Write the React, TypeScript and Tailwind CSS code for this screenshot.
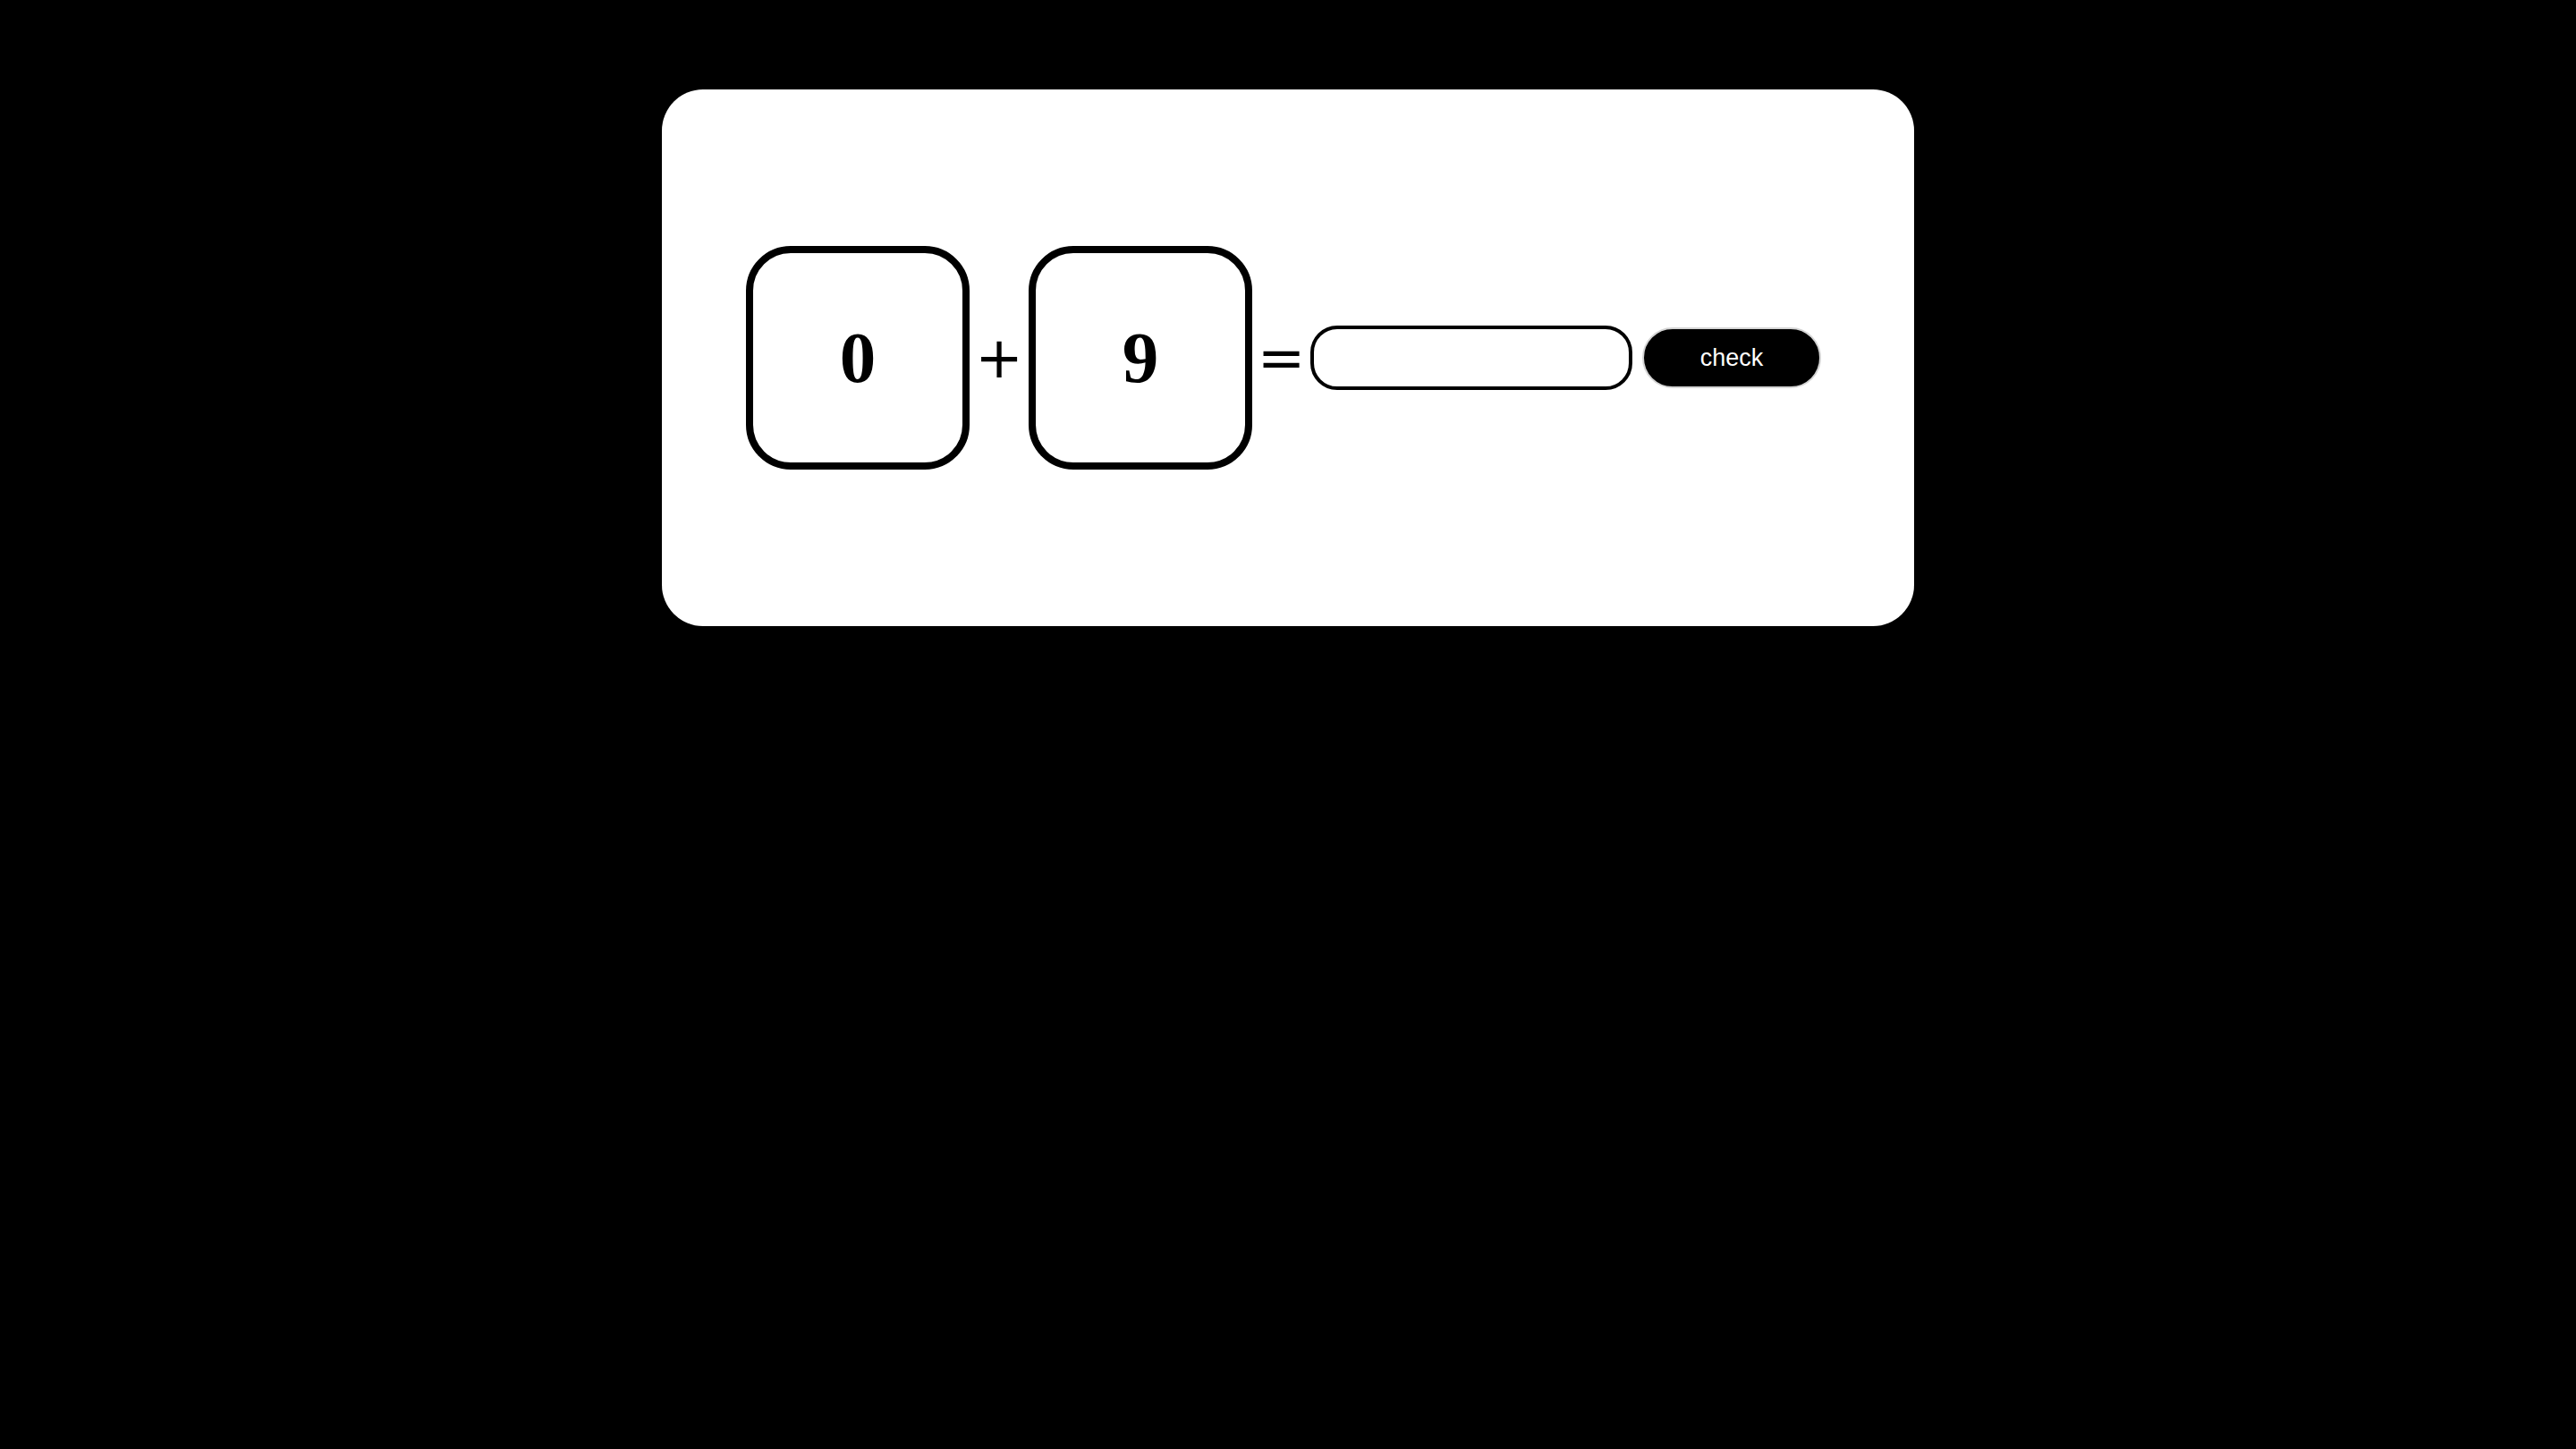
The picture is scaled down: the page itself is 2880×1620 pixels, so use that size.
import React from "react";

export default function App() {
  return (
    <div className="min-h-screen w-full bg-black pt-[100px]">
      <div className="mx-auto flex h-[600px] w-[1400px] items-center rounded-[46px] bg-white pl-[94px]">
        <div className="flex h-[250px] w-[250px] items-center justify-center rounded-[50px] border-[8px] border-black">
          <span
            className="text-[81px] font-bold leading-none text-black"
            style={{ fontFamily: '"Liberation Serif", serif' }}
          >
            0
          </span>
        </div>
        <span
          className="flex w-[66px] justify-center text-[64px] leading-none text-black"
          style={{ fontFamily: '"DejaVu Sans", sans-serif' }}
        >
          +
        </span>
        <div className="flex h-[250px] w-[250px] items-center justify-center rounded-[50px] border-[8px] border-black">
          <span
            className="text-[81px] font-bold leading-none text-black"
            style={{ fontFamily: '"Liberation Serif", serif' }}
          >
            9
          </span>
        </div>
        <span
          className="flex w-[65px] justify-center text-[64px] leading-none text-black"
          style={{ fontFamily: '"DejaVu Sans", sans-serif' }}
        >
          =
        </span>
        <input
          type="text"
          className="h-[72px] w-[360px] rounded-[30px] border-[4px] border-black bg-white px-4 outline-none"
        />
        <button
          className="ml-[11px] h-[68px] w-[200px] rounded-full border-2 border-[#d4d4d4] bg-black text-[27px] text-white"
          style={{ fontFamily: '"Liberation Sans", sans-serif' }}
        >
          check
        </button>
      </div>
    </div>
  );
}
